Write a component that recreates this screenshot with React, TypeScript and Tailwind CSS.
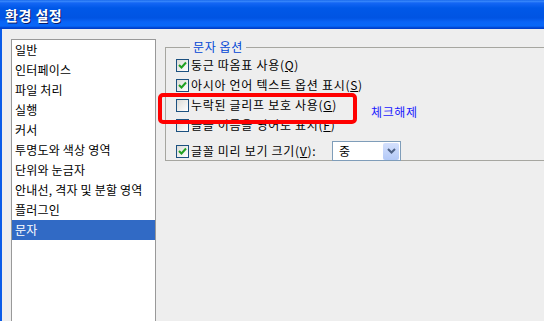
import React from 'react';

const FONT = "font-['Noto_Sans_CJK_KR','Noto_Sans',sans-serif]";

const menuItems = [
  '일반',
  '인터페이스',
  '파일 처리',
  '실행',
  '커서',
  '투명도와 색상 영역',
  '단위와 눈금자',
  '안내선, 격자 및 분할 영역',
  '플러그인',
  '문자',
];

const CheckBox: React.FC<{ checked: boolean }> = ({ checked }) => (
  <span className="flex h-[13px] w-[13px] shrink-0 items-center justify-center border border-[#1c5180] bg-[linear-gradient(135deg,#dcdcd7,#ffffff)]">
    {checked && (
      <svg width="9" height="9" viewBox="0 0 9 9">
        <path d="M1 4 L3.5 6.5 L8 1.5" fill="none" stroke="#21a121" strokeWidth="2" />
      </svg>
    )}
  </span>
);

const Option: React.FC<{ checked: boolean; label: string; hot: string }> = ({ checked, label, hot }) => (
  <div className="flex h-[20px] items-center gap-[2px]">
    <CheckBox checked={checked} />
    <span className="whitespace-nowrap text-[12px] leading-none tracking-[0.7px] text-black">
      {label}(<span className="underline">{hot}</span>)
    </span>
  </div>
);

const App: React.FC = () => {
  return (
    <div className={`relative flex h-[321px] w-[544px] flex-col overflow-hidden bg-[#eeeeee] ${FONT}`}>
      {/* title bar */}
      <div className="flex h-[29px] shrink-0 items-center bg-[linear-gradient(to_bottom,#0a5ae6_0px,#3d8dfc_1px,#1466f4_3px,#0058e8_8px,#0054e3_18px,#0a64f6_22px,#0868f8_26px,#0040cc_28px)] pl-[5px]">
        <span className="text-[14px] font-bold leading-none tracking-[0.5px] text-white [text-shadow:1px_1px_0_#0a1c6a]">환경 설정</span>
      </div>

      <div className="flex flex-1 border-l-2 border-[#0a5be8] pl-[9px] pt-[10px]">
        {/* category list */}
        <div className="h-[300px] w-[145px] shrink-0 border border-[#999999] bg-white">
          {menuItems.map((item) => (
            <div
              key={item}
              className={`flex h-[20px] items-center whitespace-nowrap px-[3px] text-[12px] tracking-[0.2px] ${
                item === '문자' ? 'bg-[#316ac5] text-white' : 'text-black'
              }`}
            >
              {item}
            </div>
          ))}
        </div>

        {/* options */}
        <div className="ml-[9px] mt-[1px] w-[400px] shrink-0">
          <fieldset className="h-[121px] border border-[#a6a6a0] px-[10px] pb-[4px]">
            <legend className="ml-[14px] px-[3px] text-[12px] leading-[14px] tracking-[0.6px] text-[#0046d5]">문자 옵션</legend>
            <div className="mt-[1px] flex flex-col">
              <Option checked label="둥근 따옴표 사용" hot="Q" />
              <Option checked label="아시아 언어 텍스트 옵션 표시" hot="S" />
              <Option checked={false} label="누락된 글리프 보호 사용" hot="G" />
              <Option checked={false} label="글꼴 이름을 영어로 표시" hot="F" />
              <div className="mt-[6px] flex h-[20px] items-center gap-[2px]">
                <CheckBox checked />
                <span className="w-[139px] whitespace-nowrap text-[12px] leading-none tracking-[0.7px] text-black">
                  글꼴 미리 보기 크기(<span className="underline">V</span>):
                </span>
                <div className="flex h-[20px] w-[69px] items-center border border-[#7f9db9] bg-white">
                  <span className="flex-1 pl-[6px] text-[12px] leading-none text-black">중</span>
                  <span className="mr-[1px] flex h-[17px] w-[16px] items-center justify-center rounded-[2px] bg-[linear-gradient(to_bottom,#d4e0fd,#b3c9f7)]">
                    <svg width="9" height="6" viewBox="0 0 9 6">
                      <path d="M1 1 L4.5 4.5 L8 1" fill="none" stroke="#4d6185" strokeWidth="2" />
                    </svg>
                  </span>
                </div>
              </div>
            </div>
          </fieldset>
        </div>
      </div>

      {/* annotation overlay */}
      <div className="absolute left-[158px] top-[93px] h-[31px] w-[199px] rounded-[5px] border-[4px] border-[#ff0000]" />
      <span className="absolute left-[371px] top-[104px] text-[12px] leading-[16px] tracking-[0.6px] text-[#1a1aff]">체크해제</span>
    </div>
  );
};

export default App;
